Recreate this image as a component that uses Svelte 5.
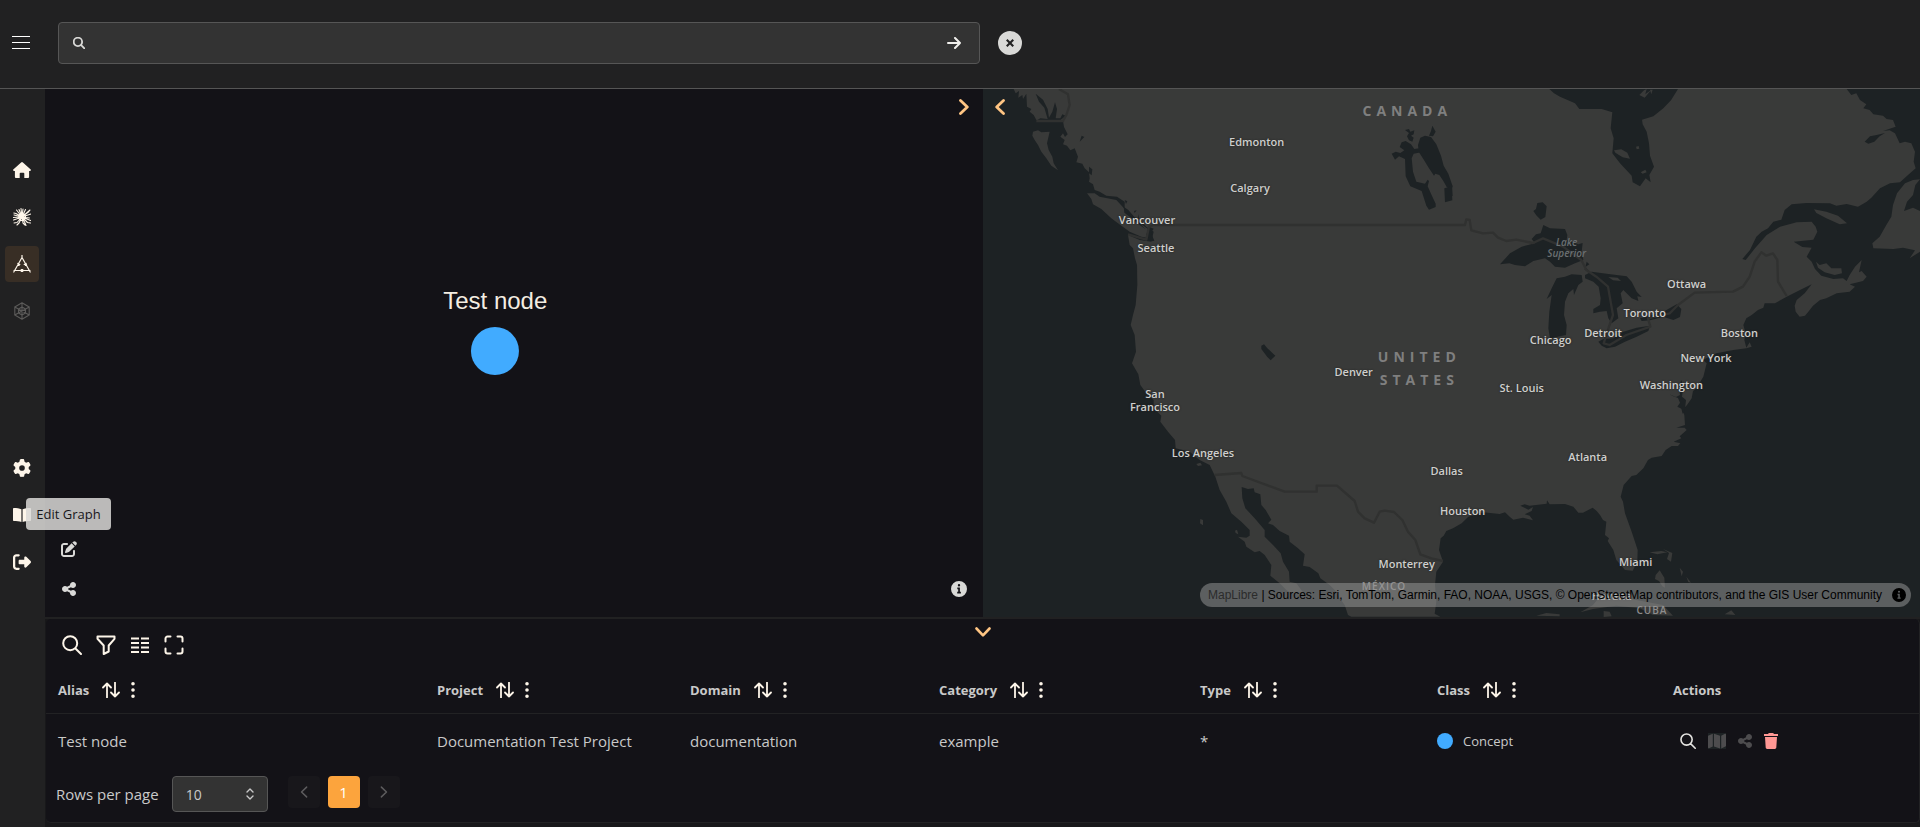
<script lang="ts">
    type Icon = { box: string; d: string; line?: number };

    const icons: Record<string, Icon> = {
        menu: { box: '0 0 18 14', d: 'M0 1.5h18M0 7.5h18M0 13.5h18', line: 1 },
        search: { box: '0 0 20 20', d: 'M8.2 1.2a7 7 0 1 0 0 14a7 7 0 1 0 0-14zM13.2 13.2L19 19', line: 2 },
        arrow: { box: '0 0 14 12', d: 'M1 6h12M8 1l5 5-5 5', line: 2 },
        home: { box: '0 0 18 16', d: 'M8.1.4a1.4 1.4 0 0 1 1.8 0l7.8 7c.6.6.2 1.5-.6 1.5h-1v5.8c0 .8-.5 1.3-1.3 1.3H11.3v-4.4c0-.5-.3-.8-.8-.8h-3c-.5 0-.8.3-.8.8V16H3.2c-.8 0-1.3-.5-1.3-1.3V8.9h-1c-.8 0-1.2-.9-.6-1.5z' },
        gear: { box: '0 0 512 512', d: 'M495.9 166.6c3.2 8.7 .5 18.4-6.4 24.6l-43.3 39.4c1.1 8.3 1.7 16.8 1.7 25.4s-.6 17.1-1.7 25.4l43.3 39.4c6.9 6.2 9.6 15.9 6.4 24.6c-4.4 11.9-9.7 23.3-15.8 34.3l-4.7 8.1c-6.6 11-14 21.4-22.1 31.2c-5.9 7.2-15.7 9.6-24.5 6.8l-55.7-17.7c-13.4 10.3-28.2 18.9-44 25.4l-12.5 57.1c-2 9.1-9 16.3-18.2 17.8c-13.8 2.3-28 3.5-42.5 3.5s-28.7-1.2-42.5-3.5c-9.2-1.5-16.2-8.7-18.2-17.8l-12.5-57.1c-15.8-6.5-30.6-15.1-44-25.4L83.1 425.9c-8.8 2.8-18.6 .3-24.5-6.8c-8.1-9.8-15.5-20.2-22.1-31.2l-4.7-8.1c-6.1-11-11.4-22.4-15.8-34.3c-3.2-8.7-.5-18.4 6.4-24.6l43.3-39.4C64.6 273.1 64 264.6 64 256s.6-17.1 1.7-25.4L22.4 191.2c-6.9-6.2-9.6-15.9-6.4-24.6c4.4-11.9 9.7-23.3 15.8-34.3l4.7-8.1c6.6-11 14-21.4 22.1-31.2c5.9-7.2 15.7-9.6 24.5-6.8l55.7 17.7c13.4-10.3 28.2-18.9 44-25.4l12.5-57.1c2-9.1 9-16.3 18.2-17.8C227.3 1.2 241.5 0 256 0s28.7 1.2 42.5 3.5c9.2 1.5 16.2 8.7 18.2 17.8l12.5 57.1c15.8 6.5 30.6 15.1 44 25.4l55.7-17.7c8.8-2.8 18.6-.3 24.5 6.8c8.1 9.8 15.5 20.2 22.1 31.2l4.7 8.1c6.1 11 11.4 22.4 15.8 34.3zM256 336a80 80 0 1 0 0-160 80 80 0 1 0 0 160z' },
        book: { box: '0 0 18 14', d: 'M8.4 1.2C6.5.3 3.5 0 .8 0 .3 0 0 .3 0 .8v11.4c0 .5.3.8.8.8 2.7 0 5.6.2 7.6 1zM9.6 1.2C11.5.3 14.5 0 17.2 0c.5 0 .8.3.8.8v11.4c0 .5-.3.8-.8.8-2.7 0-5.6.2-7.6 1z' },
        logout: { box: '0 0 512 512', d: 'M377.9 105.9L500.7 228.7c7.2 7.2 11.3 17.1 11.3 27.3s-4.1 20.1-11.3 27.3L377.9 406.1c-6.4 6.4-15 9.9-24 9.9c-18.7 0-33.9-15.2-33.9-33.9l0-62.1-128 0c-17.7 0-32-14.3-32-32l0-64c0-17.7 14.3-32 32-32l128 0 0-62.1c0-18.7 15.2-33.9 33.9-33.9c9 0 17.6 3.6 24 9.9zM160 96L96 96c-17.7 0-32 14.3-32 32l0 256c0 17.7 14.3 32 32 32l64 0c17.7 0 32 14.3 32 32s-14.3 32-32 32l-64 0c-53 0-96-43-96-96L0 128C0 75 43 32 96 32l64 0c17.7 0 32 14.3 32 32s-14.3 32-32 32z' },
        edit: { box: '0 0 512 512', d: 'M471.6 21.7c-21.9-21.9-57.3-21.9-79.2 0L362.3 51.7l97.9 97.9 30.1-30.1c21.9-21.9 21.9-57.3 0-79.2L471.6 21.7zm-299.2 220c-6.1 6.1-10.8 13.6-13.5 21.9l-29.6 88.8c-2.9 8.6-.6 18.1 5.8 24.6s15.9 8.7 24.6 5.8l88.8-29.6c8.2-2.7 15.7-7.4 21.9-13.5L437.7 172.3 339.7 74.3 172.4 241.7zM96 64C43 64 0 107 0 160V416c0 53 43 96 96 96H352c53 0 96-43 96-96V320c0-17.7-14.3-32-32-32s-32 14.3-32 32v96c0 17.7-14.3 32-32 32H96c-17.7 0-32-14.3-32-32V160c0-17.7 14.3-32 32-32h96c17.7 0 32-14.3 32-32s-14.3-32-32-32H96z' },
        share: { box: '0 32 448 448', d: 'M352 224c53 0 96-43 96-96s-43-96-96-96s-96 43-96 96c0 4 .2 8 .7 11.9l-94.1 47C145.4 170.2 121.9 160 96 160c-53 0-96 43-96 96s43 96 96 96c25.9 0 49.4-10.2 66.6-26.9l94.1 47c-.5 3.9-.7 7.8-.7 11.9c0 53 43 96 96 96s96-43 96-96s-43-96-96-96c-25.9 0-49.4 10.2-66.6 26.9l-94.1-47c.5-3.9 .7-7.8 .7-11.9s-.2-8-.7-11.9l94.1-47C302.6 213.8 326.1 224 352 224z' },
        info: { box: '0 0 16 16', d: 'M8 0a8 8 0 1 0 0 16a8 8 0 1 0 0-16zM8 3a1.2 1.2 0 1 1 0 2.4a1.2 1.2 0 1 1 0-2.4zM6.3 6.6h2.6v4.2h1V12.4H6.2v-1.6h1V8.2h-.9z' },
        close: { box: '0 0 24 24', d: 'M12 0a12 12 0 1 0 0 24a12 12 0 1 0 0-24zM9.5 8L12 10.5L14.5 8L16 9.5L13.5 12L16 14.5L14.5 16L12 13.5L9.5 16L8 14.5L10.5 12L8 9.5z' },
        right: { box: '0 0 10 16', d: 'M1.5 1.5L8.3 8l-6.8 6.5', line: 2.8 },
        left: { box: '0 0 10 16', d: 'M8.5 1.5L1.7 8l6.8 6.5', line: 2.8 },
        down: { box: '0 0 16 10', d: 'M1.5 1.5L8 8.3l6.5-6.8', line: 2.6 },
        filter: { box: '0 0 20 20', d: 'M1.5 1.5h17v2.3L12.7 10.5v6L7.7 19v-8.5L1.5 3.8z', line: 2 },
        columns: { box: '0 0 18 16', d: 'M0 1.5h8M10 1.5h8M0 6h8M10 6h8M0 10.5h8M10 10.5h8M0 15h8M10 15h8', line: 2 },
        expand: { box: '0 0 20 20', d: 'M1.5 6.5v-3a2 2 0 0 1 2-2h3M13.5 1.5h3a2 2 0 0 1 2 2v3M18.5 13.5v3a2 2 0 0 1-2 2h-3M6.5 18.5h-3a2 2 0 0 1-2-2v-3', line: 2 },
        sort: { box: '0 0 18 16', d: 'M5 15.5V1.5M1 5.5l4-4 4 4M13 .5v14M9 10.5l4 4 4-4', line: 1.8 },
        dots: { box: '0 0 4 16', d: 'M2 0a1.8 1.8 0 1 0 0 3.6a1.8 1.8 0 1 0 0-3.6zM2 6.2a1.8 1.8 0 1 0 0 3.6a1.8 1.8 0 1 0 0-3.6zM2 12.4a1.8 1.8 0 1 0 0 3.6a1.8 1.8 0 1 0 0-3.6z' },
        map: { box: '0 0 18 16', d: 'M0 3.2c0-.4.2-.7.6-.8L4.8.8v12.6L1 15.2c-.5.2-1-.1-1-.6zM6 .8l6 2v12.6l-6-2zM13.2 2.8L17 .8c.5-.2 1 .1 1 .6v11.4c0 .4-.2.7-.6.8l-4.2 1.8z' },
        trash: { box: '0 0 14 16', d: 'M4.3.5c.2-.3.5-.5.9-.5h3.6c.4 0 .7.2.9.5L10 1h4v2H0V1h4zM1 4h12l-.7 10.6c0 .8-.7 1.4-1.5 1.4H3.2c-.8 0-1.5-.6-1.5-1.4z' },
        updown: { box: '0 0 8 12', d: 'M1 4l3-3 3 3M1 8l3 3 3-3', line: 1.4 },
        triangle: { box: '0 0 18 18', d: 'M9 0v2.5M9 2.5L.8 17M9 2.5L17.2 17M1 15.5h16M4.8 8.5l2 1M13.2 8.5l-2 1M8.2 14.7h1.600v1.600H8.200zM5 9.500h1v1h-1zM12.500 9.500h1v1h-1z', line: 1.2 },
        hex: { box: '0 0 18 18', d: 'M9 .8l7.2 4.1v8.2L9 17.2l-7.2-4.1V4.9zM9 5l3.5 2v4L9 13l-3.5-2V7zM9 .8V17M1.8 4.9l14.4 8.2M16.2 4.9L1.8 13.1', line: 1.1 },
        burst: { box: '0 0 18 18', d: 'M9 9L8 .5M9 9L10 1M9 9l3.5-7.5M9 9L17 2M9 9l7-5.500M9 9l9-3M9 9l7.500 1M9 9l8.500 3.500M9 9l5.500 5.500l3 .5M9 9l3 6l1 2.500M9 9l1 6l2 2M9 9L6 15l-2 2M9 9l-5 5.500l-3 .5M9 9L.5 12M9 9L0 9.500M9 9L1 7M9 9L3 5.500L.8 5M9 9L3.500 2M9 9L6 1.500M9 5.500a3.500 3.500 0 1 0 0 7a3.500 3.500 0 1 0 0-7M9 7.500a1.500 1.500 0 1 0 0 3a1.500 1.500 0 1 0 0-3', line: 1.1 }
    };

    const mainNav = [
        { icon: 'home', label: 'Home' },
        { icon: 'burst', label: 'Explore' },
        { icon: 'triangle', label: 'Graph', active: true },
        { icon: 'hex', label: 'Models', disabled: true }
    ];
    const footNav = [
        { icon: 'gear', label: 'Settings' },
        { icon: 'book', label: 'Documentation' },
        { icon: 'logout', label: 'Log out' }
    ];

    const tools = [
        { icon: 'search', label: 'Search table' },
        { icon: 'filter', label: 'Show filters' },
        { icon: 'columns', label: 'Show columns' },
        { icon: 'expand', label: 'Full screen' }
    ];

    const columns = [
        { name: 'Alias', share: 379 },
        { name: 'Project', share: 253 },
        { name: 'Domain', share: 249 },
        { name: 'Category', share: 261 },
        { name: 'Type', share: 237 },
        { name: 'Class', share: 236 },
        { name: 'Actions', share: 258 }
    ];
    const total = columns.reduce((sum, c) => sum + c.share, 0);

    // label centres, in the units of the map drawing
    const mapW = 2811;
    const mapH = 1584;
    const places = [
        { text: 'CANADA', x: 1273, y: 64, kind: 'country' },
        { text: 'UNITED\nSTATES', x: 1309, y: 836, kind: 'country' },
        { text: 'MÉXICO', x: 1203, y: 1492, kind: 'region' },
        { text: 'CUBA', x: 2007, y: 1564, kind: 'region' },
        { text: 'Lake\nSuperior', x: 1751, y: 476, kind: 'lake' },
        { text: 'Edmonton', x: 821, y: 155 },
        { text: 'Calgary', x: 801, y: 293 },
        { text: 'Vancouver', x: 492, y: 389 },
        { text: 'Seattle', x: 519, y: 474 },
        { text: 'Ottawa', x: 2111, y: 583 },
        { text: 'Toronto', x: 1985, y: 668 },
        { text: 'Detroit', x: 1860, y: 728 },
        { text: 'Chicago', x: 1703, y: 749 },
        { text: 'Boston', x: 2269, y: 728 },
        { text: 'New York', x: 2169, y: 803 },
        { text: 'Washington', x: 2065, y: 884 },
        { text: 'St. Louis', x: 1616, y: 895 },
        { text: 'Denver', x: 1112, y: 847 },
        { text: 'San\nFrancisco', x: 516, y: 933 },
        { text: 'Los Angeles', x: 660, y: 1089 },
        { text: 'Dallas', x: 1391, y: 1142 },
        { text: 'Houston', x: 1439, y: 1262 },
        { text: 'Monterrey', x: 1271, y: 1421 },
        { text: 'Atlanta', x: 1814, y: 1102 },
        { text: 'Miami', x: 1958, y: 1416 },
        { text: 'Havana', x: 1886, y: 1517 }
    ];

    let query = $state('');
    let pageSize = $state('10');
</script>

{#snippet icon(name: string)}
    {@const i = icons[name]}
    <svg class="icon {name}" class:line={i.line} viewBox={i.box} stroke-width={i.line} aria-hidden="true">
        <path d={i.d} fill-rule="evenodd" />
    </svg>
{/snippet}

<div class="app">
    <header class="topbar">
        <button class="menu-btn" aria-label="Menu">{@render icon('menu')}</button>
        <form class="search-box" onsubmit={(e) => e.preventDefault()}>
            {@render icon('search')}
            <input type="text" aria-label="Search" bind:value={query} />
            <button aria-label="Submit search">{@render icon('arrow')}</button>
        </form>
        <button class="clear-btn" aria-label="Clear search" onclick={() => (query = '')}>{@render icon('close')}</button>
    </header>

    <div class="body">
        <nav class="sidebar">
            <div class="nav-group">
                {#each mainNav as item}
                    <button class:active={item.active} disabled={item.disabled} aria-label={item.label}>{@render icon(item.icon)}</button>
                {/each}
            </div>
            <div class="nav-group">
                {#each footNav as item}
                    <button aria-label={item.label}>{@render icon(item.icon)}</button>
                {/each}
            </div>
        </nav>

        <main class="content">
            <div class="views">
                <section class="graph">
                    <div class="node">
                        <span>Test node</span>
                        <i class="node-dot"></i>
                    </div>
                    <button class="collapse" aria-label="Expand graph">{@render icon('right')}</button>
                    <div class="graph-tools">
                        <button aria-label="Edit Graph">{@render icon('edit')}</button>
                        <button aria-label="Share">{@render icon('share')}</button>
                        <div class="tooltip" role="tooltip">Edit Graph</div>
                    </div>
                    <button class="graph-info" aria-label="Information">{@render icon('info')}</button>
                </section>

                <section class="map">
                    <svg class="map-svg" viewBox="0 12 2811 1584" preserveAspectRatio="none" aria-hidden="true">
                        <!-- mainland -->
                        <path class="land" d="M92 12L98 25L108 18L106 38L118 30L120 42L130 26L132 65L145 72L140 80L152 90L160 105L240 108L243 126L254 148L246 156L240 145L232 155L245 165L240 178L252 182L262 196L275 190L285 215L280 232L298 236L305 250L318 262L320 280L318 290L330 298L335 315L350 320L370 332L402 335L425 350L425 375L450 395L465 400L490 425L512 440L505 470L470 465L435 450L440 480L450 490L456 520L462 540L463 600L458 660L450 690L443 720L455 750L459 800L447 835L466 868L472 900L490 925L512 945L512 970L535 992L532 1010L555 1040L576 1065L578 1090L620 1100L650 1125L680 1140L697 1175L710 1215L730 1250L745 1285L775 1310L800 1335L800 1352L790 1358L765 1355L785 1370L790 1385L815 1402L830 1398L845 1410L865 1440L862 1472L890 1495L910 1515L925 1525L960 1522L940 1495L920 1490L918 1460L900 1430L893 1405L870 1380L845 1355L845 1335L815 1300L787 1270L778 1240L776 1206L795 1212L812 1210L815 1222L832 1228L835 1260L848 1275L865 1304L855 1315L870 1320L890 1338L918 1352L920 1370L945 1390L965 1408L960 1442L980 1446L1006 1465L1012 1480L1040 1500L1060 1520L1070 1540L1085 1560L1095 1590L1105 1595L1372 1595L1355 1586L1360 1550L1356 1500L1360 1460L1380 1430L1368 1395L1373 1360L1382 1352L1390 1338L1410 1330L1436 1315L1456 1295L1501 1282L1550 1287L1566 1282L1580 1295L1591 1304L1620 1298L1650 1306L1640 1292L1625 1288L1646 1278L1650 1266L1636 1274L1612 1262L1625 1258L1640 1262L1691 1256L1692 1246L1700 1258L1746 1257L1771 1265L1786 1283L1800 1283L1829 1268L1841 1278L1851 1290L1860 1305L1870 1310L1866 1350L1878 1360L1874 1368L1891 1395L1900 1425L1926 1455L1949 1457L1963 1430L1964 1395L1946 1340L1926 1285L1920 1250L1913 1235L1922 1200L1946 1173L1960 1170L1981 1150L1995 1125L2006 1118L2036 1113L2048 1095L2066 1083L2085 1083L2092 1075L2072 1070L2095 1060L2090 1054L2111 1035L2105 1028L2080 1028L2106 1020L2104 990L2098 975L2112 960L2126 940L2130 918L2141 910L2150 893L2161 875L2171 835L2160 825L2200 805L2251 795L2290 790L2306 785L2300 772L2290 788L2284 765L2288 745L2281 720L2290 700L2306 690L2325 675L2341 668L2345 655L2376 655L2411 635L2451 615L2486 598L2465 625L2441 645L2435 662L2438 680L2450 695L2466 692L2476 680L2490 662L2511 645L2530 640L2561 625L2600 620L2616 605L2600 598L2640 588L2651 575L2636 558L2628 562L2636 525L2616 545L2600 570L2591 588L2580 580L2551 582L2515 572L2496 552L2486 530L2471 515L2486 488L2458 486L2432 470L2491 464L2503 440L2498 425L2486 410L2441 412L2391 425L2351 450L2316 490L2288 525L2278 522L2301 495L2320 455L2336 440L2355 430L2371 410L2395 404L2405 375L2426 358L2470 354L2541 355L2560 362L2591 357L2625 365L2651 350L2665 338L2691 310L2721 295L2751 292L2775 270L2798 250L2792 230L2796 200L2785 175L2766 170L2750 175L2736 145L2720 136L2700 138L2738 125L2730 105L2711 102L2700 92L2671 88L2660 75L2641 70L2650 58L2631 45L2620 25L2605 30L2591 12z" />
                        <!-- islands -->
                        <path class="land" d="M150 140L165 136L175 142L200 140L192 175L197 195L208 215L212 235L225 256L205 242L190 220L175 200L165 180L155 165L148 152zM312 325L335 325L350 335L400 345L425 372L440 385L470 415L495 432L490 450L500 460L475 455L440 440L405 415L385 400L355 372L330 358L325 342zM640 1137l12-4 5 8-12 2zM652 1302l8 3v16l-9-6zM756 1337l6-3 4 14-8-4z" />
                        <path class="land" d="M2766 295L2790 285L2811 283L2797 300L2790 330L2772 350L2763 378L2790 368L2811 378V500L2780 520L2796 496L2760 488L2731 492L2671 490L2668 475L2690 455L2710 420L2725 395L2730 360L2742 325zM2493 373L2530 380L2565 392L2592 415L2570 418L2530 400L2500 384zM2499 530L2510 540L2530 535L2545 550L2575 550L2577 565L2555 570L2525 562L2505 548z" />
                        <path class="land" d="M2000 1402l35-4 18 4-30 6zM2040 1392l28 12-4 26-12-8 6-18zM2018 1470l12-14 14 22 2 30-8-4-10-16-12-6zM2090 1448l10 12-4 14zM2110 1475l14 18-8-2zM1792 1582L1830 1560L1850 1535L1900 1530L1960 1545L2040 1560L2070 1592L2010 1590L1970 1570L1900 1562L1830 1572zM1660 1592l30-8 40 4v6zM2225 1588l20-12 12 14zM1862 1578l18 2 6 14-24 2z" />
                        <!-- inlets -->
                        <path class="water" d="M158 26l22 18 14 28 4 26 10-18 8-28 6 20-4 28 14 0 6-12 10 4-16 14h-70l10-6 22 2-10-34-16-18zM296 152l8 4-14 14zM318 245l10 8-2 18-8-6zM422 365l14 10 26 30 6-18-2 24 22 22-14-10-24-20-26-20zM498 425l14 6-8 12 10 24-8 2-14-14zM425 345l8 4-4 8zM453 378l8-2-6 8z" />
                        <!-- Manitoba lakes -->
                        <path class="water" d="M1266 135l12-3 4 8 12-4-2 12-8 4 8 6-4 12-10-4-6-12 6-10zM1348 122l10 18-8 14-12-2 6-14zM1256 172l12-4 16 10 10 14 14-2 6 12 -22 4-6 14 4 40 10 30 26 6 8-12 4 4-4 16 10 22 14 30 0 10-20 8-8-12-14-44-34-14-14-30-2-52-18-8-12 10-10-18 12-6 14 4 12-8-14-10zM1312 158l14-6 18 4 16 22 14 34 8 30 14 24 13 38-4 10-14-8-10-18-12-18-12-4-4 6-16-24-16-26-14-22-2-20z" />
                        <path class="water" d="M1384 310l22-6 2 42-22 6zM1401 295l6 4 2 34-8 2zM835 782l8-4 10 12 24 22-14 14-10-10-18-24z" />
                        <g transform="translate(1401)">
                            <!-- Hudson Bay -->
                            <path class="water" d="M298 12L312 25L330 35L375 55L388 72L455 72L487 82L482 130L491 160L487 205L510 235L545 272L548 292L570 304L587 280L602 292L598 270L612 245L600 212L597 175L590 140L578 118L576 104L610 94L640 70L663 46L684 12z" />
                            <path class="land" d="M492 196l22-3 18 10 8 18-22-4-22-14zM572 262l14-8 4 8-12 4zM558 185l8-2 2 8-8 2zM568 30l14-14 8-4-4 16 18-14-20 24zM600 14l8 0-4 14z" />
                            <!-- Great Lakes -->
                            <path class="water" d="M262 354l16-2 12 12-4 32-14 8-12-12-10-14 8-6zM245 462L258 448L272 445L280 420L300 430L345 432L352 450L350 465L385 478L398 474L395 500L400 525L375 535L345 548L315 545L300 530L285 520L250 528L225 544L195 540L178 535L150 538L180 505L215 485L255 475zM290 642L305 610L320 580L345 575L365 568L395 570L398 590L385 600L372 630L370 612L355 625L345 650L342 690L350 720L348 750L300 760L295 730L298 680L305 630zM410 530l8 8-12 8 12 14-14-6zM425 560L470 566L530 574L545 590L560 620L575 636L562 634L565 648L545 640L520 615L512 625L518 655L500 670L505 700L485 715L475 700L470 678L450 680L430 685L430 672L450 660L452 640L446 605L430 590L405 580L405 570zM445 770L460 762L490 760L520 740L560 728L600 722L595 738L560 755L525 770L495 785L470 790L455 782zM570 700L590 695L640 680L680 658L694 672L690 696L670 705L640 695L600 706L575 708z" />
                            <path class="water" d="M1244 170l16-16 20-4 25-6-16 10-16 16-18 6zM658 928l20 8 12-6-2-30 6-15 6 20-4 30 12 10-4 35-6 6-4-15-12-6 8-12-6-14-16-6z" />
                            <path class="land" d="M475 576l28 2 10 10-24-2z" />
                        </g>
                        <path class="border" d="M228 12L255 28L260 60L250 90L240 108H160M435 448L490 464L498 425L512 420H1446L1450 403L1460 405L1465 436L1500 445L1530 443L1545 458L1570 468L1600 464L1650 474L1680 460L1740 485L1795 525L1810 555L1840 575L1875 605L1890 690L1878 725L1862 775L1880 780L1930 750L2002 725L1995 700L2060 685L2085 660L2135 623L2250 620L2280 605L2300 575L2315 530L2335 502L2350 512L2370 505L2383 525L2385 590L2411 633M695 1170L775 1164L778 1173L905 1220H1001V1202H1062L1115 1248L1125 1280L1145 1300L1173 1313L1190 1280L1205 1277L1233 1281L1258 1305L1275 1340L1297 1365L1312 1408L1345 1420L1380 1428" />
                    </svg>
                    {#each places as p}
                        <span class="place {p.kind ?? 'city'}" style="left: {(p.x / mapW) * 100}%; top: {(p.y / mapH) * 100}%">{p.text}</span>
                    {/each}
                    <button class="collapse" aria-label="Expand map">{@render icon('left')}</button>
                    <div class="attribution">
                        <p><a href="#maplibre">MapLibre</a> | Sources: Esri, TomTom, Garmin, FAO, NOAA, USGS, © OpenStreetMap contributors, and the GIS User Community</p>
                        <button aria-label="Toggle attribution">{@render icon('info')}</button>
                    </div>
                </section>
            </div>

            <section class="panel">
                <div class="toolbar">
                    {#each tools as tool}
                        <button aria-label={tool.label}>{@render icon(tool.icon)}</button>
                    {/each}
                </div>
                <button class="panel-toggle" aria-label="Collapse table">{@render icon('down')}</button>

                <table>
                    <colgroup>
                        {#each columns as col}
                            <col style="width: {(col.share / total) * 100}%" />
                        {/each}
                    </colgroup>
                    <thead>
                        <tr>
                            {#each columns as col}
                                <th>
                                    <div class="head">
                                        <span>{col.name}</span>
                                        {#if col.name !== 'Actions'}
                                            <button aria-label="Sort by {col.name}">{@render icon('sort')}</button>
                                            <button aria-label="{col.name} column actions">{@render icon('dots')}</button>
                                        {/if}
                                    </div>
                                </th>
                            {/each}
                        </tr>
                    </thead>
                    <tbody>
                        <tr>
                            <td>Test node</td>
                            <td>Documentation Test Project</td>
                            <td>documentation</td>
                            <td>example</td>
                            <td>*</td>
                            <td><div class="class-cell"><i></i>Concept</div></td>
                            <td>
                                <div class="actions">
                                    <button aria-label="Find">{@render icon('search')}</button>
                                    <button class="off" aria-label="Show on map" disabled>{@render icon('map')}</button>
                                    <button class="off" aria-label="Share" disabled>{@render icon('share')}</button>
                                    <button class="danger" aria-label="Delete">{@render icon('trash')}</button>
                                </div>
                            </td>
                        </tr>
                    </tbody>
                </table>

                <div class="pager">
                    <label for="page-size">Rows per page</label>
                    <div class="select">
                        <select id="page-size" bind:value={pageSize}>
                            <option>5</option>
                            <option>10</option>
                            <option>20</option>
                        </select>
                        {@render icon('updown')}
                    </div>
                    <div class="pages">
                        <button aria-label="Previous page" disabled>{@render icon('left')}</button>
                        <button class="current">1</button>
                        <button aria-label="Next page" disabled>{@render icon('right')}</button>
                    </div>
                </div>
            </section>
        </main>
    </div>
</div>

<style>
    :global(body) {
        background: #18181a;
    }
    .app {
        display: flex;
        flex-direction: column;
        min-height: 100vh;
        color: #c9c9c9;
        font-family: 'Open Sans', 'Noto Sans', sans-serif;
        font-size: 15px;
    }
    button {
        display: inline-flex;
        align-items: center;
        justify-content: center;
        padding: 0;
        border: none;
        background: none;
        color: inherit;
        font: inherit;
    }
    .icon {
        display: block;
        width: 18px;
        height: 18px;
        fill: currentColor;
    }
    .icon.line {
        fill: none;
        stroke: currentColor;
        stroke-linecap: round;
        stroke-linejoin: round;
    }
    .icon.columns,
    .icon.menu {
        stroke-linecap: butt;
    }

    /* top bar */
    .topbar {
        display: flex;
        align-items: center;
        box-sizing: border-box;
        height: 89px;
        padding: 0 12px 2px;
        border-bottom: 1px solid #555;
        background: #212122;
    }
    .menu-btn {
        margin-right: 28px;
        padding-bottom: 2px;
        color: #fff;
    }
    .menu-btn .icon {
        height: 14px;
    }
    .search-box {
        display: flex;
        align-items: center;
        box-sizing: border-box;
        width: 48vw;
        height: 42px;
        padding: 0 18px 0 14px;
        border: 1px solid #565656;
        border-radius: 4px;
        background: #333;
        color: #d9d9d7;
    }
    .search-box .search {
        width: 12px;
        height: 12px;
        stroke-width: 3;
    }
    .search-box .arrow {
        width: 14px;
        height: 12px;
        color: #f0efec;
    }
    .search-box input {
        flex: 1;
        margin: 0 12px;
        border: none;
        outline: none;
        background: none;
        color: inherit;
        font: inherit;
    }
    .clear-btn {
        margin-left: 18px;
        color: #d9d9d7;
    }
    .clear-btn .icon {
        width: 24px;
        height: 24px;
    }

    .body {
        display: flex;
        flex: 1;
    }

    /* side bar */
    .sidebar {
        display: flex;
        flex-direction: column;
        gap: 121px;
        width: 34px;
        padding: 63px 6px 0 5px;
        background: #212122;
        color: #fdf5e9;
    }
    .nav-group {
        display: grid;
        gap: 11px;
    }
    .nav-group button {
        height: 36px;
        border-radius: 4px;
    }
    .nav-group .active {
        background: #382e25;
    }
    .nav-group button:disabled {
        color: #5b5a59;
    }

    .content {
        display: flex;
        flex: 1;
        flex-direction: column;
        min-width: 0;
    }
    .views {
        display: grid;
        flex: 1;
        grid-template-columns: 938fr 937fr;
        min-height: 400px;
        border-bottom: 2px solid #212122;
    }
    .collapse {
        position: absolute;
        top: 10px;
        color: #ffc583;
    }
    .collapse .icon {
        width: 10px;
        height: 16px;
    }

    /* graph canvas */
    .graph {
        position: relative;
        background: #131217;
    }
    .graph .collapse {
        right: 14px;
    }
    .node {
        position: absolute;
        top: 50%;
        left: 48%;
        display: grid;
        justify-items: center;
        gap: 14px;
        color: #f3ede2;
        font: 24px/24px 'Liberation Sans', Arial, sans-serif;
        transform: translate(-50%, -64px);
    }
    .node-dot {
        width: 48px;
        height: 48px;
        border-radius: 50%;
        background: #41abff;
    }
    .graph-tools {
        position: absolute;
        bottom: 20px;
        left: 16px;
        display: grid;
        justify-items: center;
        gap: 24px;
        color: #d9d9d7;
    }
    .graph-tools .icon {
        width: 16px;
        height: 16px;
    }
    .graph-tools .share {
        width: 14px;
    }
    .tooltip {
        position: absolute;
        z-index: 2;
        bottom: 67px;
        left: -35px;
        box-sizing: border-box;
        width: 85px;
        height: 32px;
        border-radius: 4px;
        background: rgba(217, 216, 214, 0.85);
        color: #17161a;
        font-size: 13px;
        line-height: 32px;
        text-align: center;
        white-space: nowrap;
    }
    .graph-info {
        position: absolute;
        right: 16px;
        bottom: 20px;
        color: #d9d9d7;
    }
    .graph-info .icon {
        width: 16px;
        height: 16px;
    }

    /* map */
    .map {
        position: relative;
        overflow: hidden;
        background: #1d2224;
    }
    .map .collapse {
        left: 12px;
    }
    .map-svg {
        position: absolute;
        width: 100%;
        height: 100%;
    }
    .land {
        fill: #393a39;
    }
    .water {
        fill: #1d2224;
    }
    .border {
        fill: none;
        stroke: #303130;
        stroke-width: 7;
        stroke-linejoin: round;
    }
    .place {
        position: absolute;
        text-align: center;
        white-space: pre;
        transform: translate(-50%, -50%);
    }
    .city {
        color: #cfcfcd;
        font-size: 11px;
        font-weight: 600;
        line-height: 13px;
        text-shadow: 0 0 2px #222;
    }
    .country {
        color: #7f7f7f;
        font-size: 14px;
        font-weight: 700;
        letter-spacing: 5px;
        line-height: 23px;
    }
    .region {
        color: #8d8d8d;
        font-size: 10px;
        font-weight: 600;
        letter-spacing: 1px;
        line-height: 12px;
    }
    .lake {
        color: #6b7072;
        font-size: 10px;
        font-style: italic;
        font-weight: 600;
        line-height: 11px;
    }
    .attribution {
        position: absolute;
        right: 9px;
        bottom: 10px;
        display: flex;
        align-items: center;
        gap: 10px;
        height: 24px;
        padding: 0 5px 0 8px;
        border-radius: 12px;
        background: rgba(156, 156, 156, 0.5);
        color: #000;
        font: 12px/24px 'Liberation Sans', Arial, sans-serif;
        white-space: nowrap;
    }
    .attribution p {
        margin: 0;
    }
    .attribution a {
        color: #2b2b2b;
        text-decoration: none;
    }
    .attribution .icon {
        width: 14px;
        height: 14px;
    }

    /* table panel */
    .panel {
        position: relative;
        margin: 0 0 4px 1px;
        padding-bottom: 10px;
        border: solid #222224;
        border-width: 0 1px 1px 0;
        border-radius: 5px;
        background: #131217;
    }
    .toolbar {
        display: flex;
        gap: 14px;
        padding: 16px 16px 12px;
        color: #fdf5e9;
    }
    .toolbar .icon {
        width: 20px;
        height: 20px;
    }
    .toolbar .columns {
        height: 16px;
    }
    .panel-toggle {
        position: absolute;
        top: 8px;
        left: 50%;
        color: #ffc583;
        transform: translateX(-50%);
    }
    .panel-toggle .icon {
        width: 16px;
        height: 10px;
    }
    table {
        width: 100%;
        border-collapse: collapse;
        table-layout: fixed;
    }
    th,
    td {
        padding: 0 12px;
        text-align: left;
    }
    th {
        height: 46px;
        border-bottom: 1px solid #222224;
        font-size: 13px;
        font-weight: 700;
    }
    td {
        height: 53px;
    }
    .head {
        display: flex;
        align-items: center;
        gap: 13px;
        color: #c9c9c9;
    }
    .head button {
        color: #fdf5e9;
    }
    .head .icon {
        height: 16px;
    }
    .head .dots {
        width: 4px;
    }
    .head button + button {
        margin-left: -2px;
    }
    .class-cell {
        display: flex;
        align-items: center;
        gap: 10px;
        font-size: 13px;
    }
    .class-cell i {
        width: 16px;
        height: 16px;
        border-radius: 50%;
        background: #41abff;
    }
    .actions {
        display: flex;
        align-items: center;
        gap: 12px;
        padding-left: 7px;
        color: #e4e3e0;
    }
    .actions .icon {
        height: 16px;
    }
    .actions .search {
        width: 16px;
    }
    .actions .share,
    .actions .trash {
        width: 14px;
    }
    .actions .off {
        color: #4d4c4e;
    }
    .actions .danger {
        color: #ff9794;
    }
    .pager {
        display: flex;
        align-items: center;
        padding: 9px 10px 0;
    }
    .select {
        position: relative;
        margin: 0 20px 0 13px;
    }
    .select select {
        width: 96px;
        height: 36px;
        padding: 0 13px;
        border: 1px solid #565656;
        border-radius: 4px;
        appearance: none;
        background: #333;
        color: #c9c9c9;
        font: inherit;
        font-size: 14px;
    }
    .select .icon {
        position: absolute;
        top: 12px;
        right: 14px;
        width: 8px;
        height: 12px;
        pointer-events: none;
    }
    .pages {
        display: flex;
        gap: 8px;
        padding-bottom: 4px;
    }
    .pages button {
        width: 32px;
        height: 32px;
        border-radius: 4px;
        background: #18171b;
        color: #5d5c5e;
    }
    .pages .icon {
        width: 8px;
        height: 12px;
        stroke-width: 2;
    }
    .pages .current {
        background: #fca43d;
        color: #fff;
    }
</style>
